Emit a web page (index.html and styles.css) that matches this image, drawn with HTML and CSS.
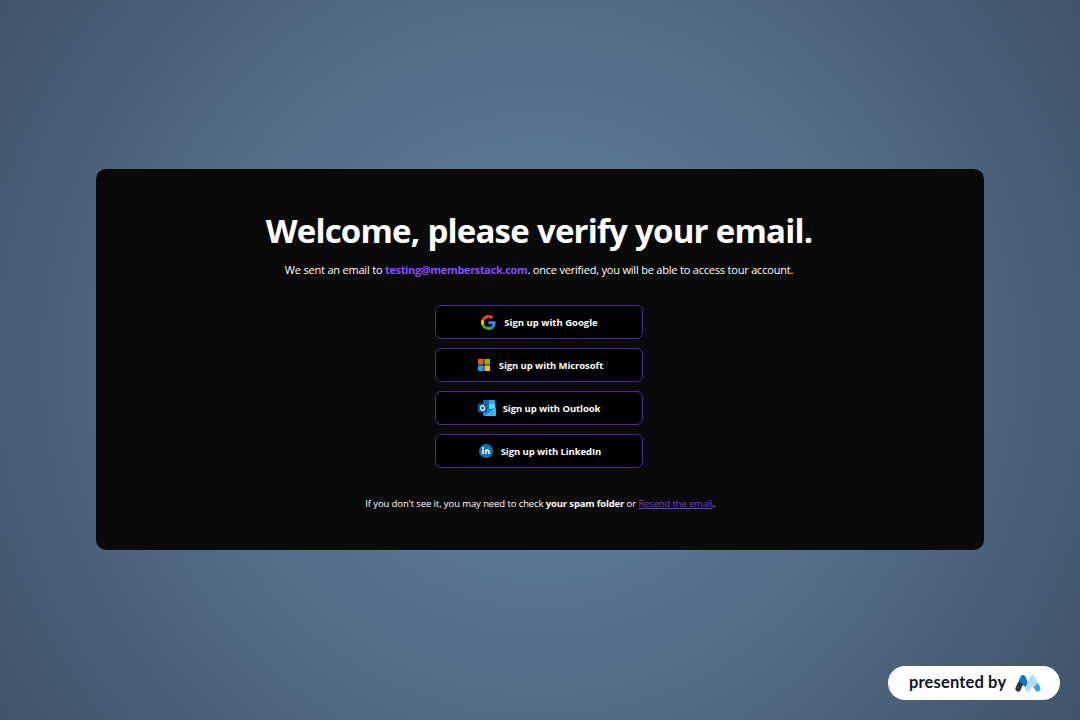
FILE: index.html
```html
<!DOCTYPE html>
<html lang="en">
<head>
<meta charset="UTF-8">
<meta name="viewport" content="width=device-width, initial-scale=1">
<title>Verify your email</title>
<link rel="stylesheet" href="styles.css">
</head>

<body>
<main class="verify-card">
    <h1>Welcome, please verify your email.</h1>
    <p class="sent-text">We sent an email to <b>testing@memberstack.com</b>. once verified, you will be able to access tour account.</p>

    <div class="providers">
        <button class="provider google">
            <svg width="15" height="15" viewBox="0 0 48 48">
                <path fill="#ea4335" d="M24 9.5c3.54 0 6.71 1.22 9.21 3.6l6.85-6.85C35.9 2.38 30.47 0 24 0 14.62 0 6.51 5.38 2.56 13.22l7.98 6.19C12.43 13.72 17.74 9.5 24 9.5z"/>
                <path fill="#4285f4" d="M46.98 24.55c0-1.57-.15-3.09-.38-4.55H24v9.02h12.94c-.58 2.96-2.26 5.48-4.78 7.18l7.73 6c4.51-4.18 7.09-10.36 7.09-17.65z"/>
                <path fill="#fbbc05" d="M10.53 28.59c-.48-1.45-.76-2.99-.76-4.59s.27-3.14.76-4.59l-7.98-6.19C.92 16.46 0 20.12 0 24c0 3.88.92 7.54 2.56 10.78l7.97-6.19z"/>
                <path fill="#34a853" d="M24 48c6.48 0 11.93-2.13 15.89-5.81l-7.73-6c-2.15 1.45-4.92 2.3-8.16 2.3-6.26 0-11.57-4.22-13.47-9.91l-7.98 6.19C6.51 42.62 14.62 48 24 48z"/>
            </svg>
            <span>Sign up with Google</span>
        </button>
        <button class="provider microsoft">
            <svg width="12" height="12" viewBox="0 0 12 12">
                <path fill="#f35325" d="M0 0h5.6v5.6H0z"/>
                <path fill="#81bc06" d="M6.4 0H12v5.6H6.4z"/>
                <path fill="#05a6f0" d="M0 6.4h5.6V12H0z"/>
                <path fill="#ffba08" d="M6.4 6.4H12V12H6.4z"/>
            </svg>
            <span>Sign up with Microsoft</span>
        </button>
        <button class="provider outlook">
            <svg width="18" height="16" viewBox="0 0 18 16">
                <rect x="5" y="0" width="12" height="13" rx="1" fill="#0f6cbd"/>
                <path fill="#28a8ea" d="M11 0h5q1 0 1 1v4h-6z"/>
                <path fill="#50d9ff" d="M11 4h6v5h-6z"/>
                <path fill="#1490df" d="M5 7l6 3 7-3v8q0 1-1 1H6q-1 0-1-1z"/>
                <path fill="#35b8f1" d="M18 7v8q0 1-1 1H7z"/>
                <rect x="0" y="3.5" width="9" height="9" rx="1" fill="#0f5ca8"/>
                <ellipse cx="4.5" cy="8" rx="2" ry="2.3" fill="none" stroke="#fff" stroke-width="1.2"/>
            </svg>
            <span>Sign up with Outlook</span>
        </button>
        <button class="provider linkedin">
            <svg width="14" height="14" viewBox="0 0 14 14">
                <circle cx="7" cy="7" r="7" fill="#0a78b5"/>
                <circle cx="4" cy="3.9" r="1" fill="#fff"/>
                <path fill="none" stroke="#fff" stroke-width="1.6" d="M4 5.5V10M6.8 10V5.5M6.8 8c0-2.4 3.3-2.6 3.3 0v2"/>
            </svg>
            <span>Sign up with LinkedIn</span>
        </button>
    </div>

    <p class="spam-text">If you don't see it, you may need to check <b>your spam folder</b> or <a href="#">Resend the email</a>.</p>
</main>

<div class="presented">
    <span>presented by</span>
    <svg width="26" height="17" viewBox="0 0 26 17">
        <g fill="none" stroke-width="5.6" stroke-linecap="round">
            <path stroke="#0a74cc" d="M8 3L5.6 8.6M8 3l2.6 6"/>
            <path stroke="#333539" d="M4.8 9.8L3.2 13.8"/>
            <path stroke="#2ea3f7" d="M20.6 9.5l2 4.3"/>
            <path stroke="#b3dcff" d="M17.4 3L12.8 13.8M17.4 3l2 5"/>
        </g>
    </svg>
</div>
</body>
</html>
```

FILE: styles.css
```css
* {
    box-sizing: border-box;
}

body {
    margin: 0;
    height: 100vh;
    padding: 169px 96px 0;
    overflow: hidden;
    font-family: 'Segoe UI', 'Open Sans', sans-serif;
    color: white;
    background: radial-gradient(circle, #6583a3 0%, #526b85 56%, #40546b 100%);
}

.verify-card {
    display: flex;
    flex-direction: column;
    align-items: center;
    width: 888px;
    height: 381px;
    padding-top: 39px;
    border-radius: 10px;
    background-color: #0a0a0a;
    white-space: nowrap;
}

h1 {
    margin: 0 0 0 -2px;
    font-size: 33px;
    line-height: 46px;
    letter-spacing: -0.82px;
    word-spacing: 0.4px;
}

.sent-text {
    margin: 7px 0 0 -2px;
    font-size: 11px;
    line-height: 18px;
    letter-spacing: -0.2px;
}

.sent-text b {
    color: #824dff;
    letter-spacing: -0.35px;
}

.providers {
    display: flex;
    flex-direction: column;
    gap: 9px;
    margin: 26px 2px 0 0;
}

.provider {
    display: flex;
    align-items: center;
    justify-content: center;
    gap: 9px;
    width: 208px;
    height: 34px;
    padding: 0;
    border: 1px solid #4b2b91;
    border-radius: 6px;
    background-color: black;
    color: white;
    font-family: inherit;
    font-size: 9.5px;
    font-weight: bold;
    letter-spacing: -0.08px;
    cursor: pointer;
}

.google {
    gap: 8px;
    padding-left: 1px;
    letter-spacing: 0;
}

.microsoft {
    padding-left: 3px;
}

.outlook {
    gap: 7px;
}

.linkedin {
    gap: 8px;
    padding-left: 2px;
}

.spam-text {
    margin: 27px 0 0 0;
    font-size: 9.5px;
    line-height: 17px;
    letter-spacing: -0.1px;
}

.spam-text b {
    letter-spacing: -0.16px;
}

.spam-text a {
    color: #6d3edb;
    letter-spacing: -0.15px;
}

/* badge in the corner */
.presented {
    position: absolute;
    right: 20px;
    bottom: 20px;
    display: flex;
    align-items: center;
    gap: 9px;
    width: 172px;
    height: 34px;
    padding-left: 21px;
    border-radius: 17px;
    background-color: white;
    color: #10162a;
    font-family: 'Lato', sans-serif;
    font-size: 16.5px;
    font-weight: bold;
    line-height: 20px;
    letter-spacing: 0.15px;
    white-space: nowrap;
}

.presented span {
    padding-bottom: 3px;
}
```
